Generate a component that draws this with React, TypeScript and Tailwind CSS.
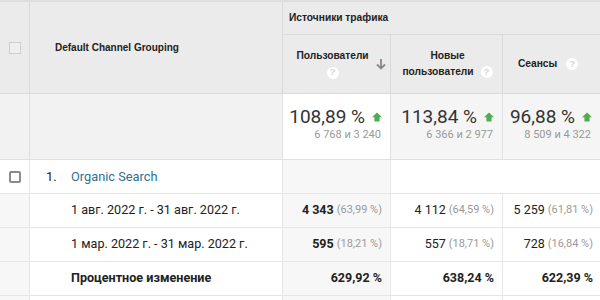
import React from "react";

const arial = { fontFamily: '"Liberation Sans", Arial, sans-serif' };
const roboto = { fontFamily: 'Roboto, "Liberation Sans", sans-serif' };

function Help() {
  return (
    <span className="inline-flex h-[12px] w-[12px] items-center justify-center rounded-full bg-white text-[9px] font-bold leading-none text-[#d4d4d4]" style={arial}>
      ?
    </span>
  );
}

function Up() {
  return (
    <svg width="10" height="10" viewBox="0 0 10 10" className="shrink-0">
      <polygon points="5,0.5 10,5.2 7.6,5.2 7.6,9.5 2.4,9.5 2.4,5.2 0,5.2" fill="#4cae4f" />
    </svg>
  );
}

function Summary({ v, s, bg, last }: { v: string; s: string; bg: string; last?: boolean }) {
  return (
    <div className={`h-[66px] ${last ? "" : "border-r"} border-b border-[#e0e0e0] ${bg} flex flex-col items-end pr-[8px] pt-[10px]`} style={roboto}>
      <div className="flex items-center gap-[7px]">
        <span className="text-[19px] leading-[25px] text-[#333]">{v}</span>
        <Up />
      </div>
      <span className="mr-[1px] text-[11px] leading-[12px] text-[#999]">{s}</span>
    </div>
  );
}

function Val({ b, p, bold, bg, last }: { b: string; p: string; bold?: boolean; bg: string; last?: boolean }) {
  return (
    <div className={`h-[34px] ${last ? "pr-[7px]" : "border-r pr-[8px]"} border-b border-[#e6e6e6] ${bg} flex items-center justify-end`} style={roboto}>
      <span className={`text-[12.5px] text-[#222] ${bold ? "font-bold" : ""}`}>{b}</span>
      <span className="ml-[3px] text-[11px] text-[#9a9a9a]">{p}</span>
    </div>
  );
}

export default function App() {
  const left = "h-[34px] border-r border-b border-[#e6e6e6] bg-[#f7f7f7]";
  const label = "flex h-[34px] items-center border-r border-b border-[#e6e6e6] bg-white pl-[41px] text-[12.6px] text-[#222]";
  const pct = "flex h-[34px] items-center justify-end border-b border-[#e6e6e6] text-[12.5px] font-bold text-[#222]";
  return (
    <div className="h-[300px] w-[600px] overflow-hidden bg-white">
      <div className="grid grid-cols-[30px_253px_108px_112px_97px] border-t-2 border-[#dedede]">
        {/* header */}
        <div className="row-span-2 flex h-[92px] items-center justify-center border-r border-b border-[#dadada] bg-[#ebebeb]">
          <div className="h-[12px] w-[12px] border border-[#cfcfcf] bg-[#efefef]" />
        </div>
        <div className="row-span-2 flex h-[92px] items-center border-r border-b border-[#dadada] bg-[#ebebeb] pl-[25px]">
          <span className="text-[10px] font-bold text-[#222]" style={arial}>Default Channel Grouping</span>
        </div>
        <div className="col-span-3 flex h-[33px] items-center border-b border-[#dadada] bg-[#ebebeb] pl-[6px]">
          <span className="text-[10.2px] font-bold text-[#222]" style={arial}>Источники трафика</span>
        </div>
        <div className="relative flex h-[59px] flex-col items-center justify-center gap-[5px] border-r border-b border-[#dadada] bg-[#ebebeb] pr-[8px]" style={arial}>
          <span className="text-[10.2px] font-bold leading-[12px] text-[#222]">Пользователи</span>
          <Help />
          <svg width="10" height="12" viewBox="0 0 10 12" className="absolute right-[4px] top-[23px]">
            <path d="M5 1 V10 M1 6.5 L5 10.5 L9 6.5" stroke="#888" strokeWidth="1.8" fill="none" />
          </svg>
        </div>
        <div className="flex h-[59px] flex-col items-center justify-center border-r border-b border-[#dadada] bg-[#ebebeb] pl-[2px]" style={arial}>
          <span className="text-[10.2px] font-bold leading-[16px] text-[#222]">Новые</span>
          <div className="flex items-center gap-[7px]">
            <span className="text-[10.2px] font-bold leading-[16px] text-[#222]">пользователи</span>
            <Help />
          </div>
        </div>
        <div className="flex h-[59px] items-center border-b border-[#dadada] bg-[#ebebeb] pl-[15px] gap-[9px]" style={arial}>
          <span className="text-[10.2px] font-bold text-[#222]">Сеансы</span>
          <Help />
        </div>

        {/* summary */}
        <div className="h-[66px] border-r border-b border-[#e0e0e0] bg-[#f2f2f2]" />
        <div className="h-[66px] border-r border-b border-[#e0e0e0] bg-[#f2f2f2]" />
        <Summary v="108,89 %" s="6 768 и 3 240" bg="bg-white" />
        <Summary v="113,84 %" s="6 366 и 2 977" bg="bg-[#f5f5f5]" />
        <Summary v="96,88 %" s="8 509 и 4 322" bg="bg-[#f5f5f5]" last />

        {/* organic */}
        <div className="flex h-[34px] items-center justify-center border-r border-b border-[#e6e6e6] bg-white">
          <div className="h-[12px] w-[12px] rounded-[2px] border-2 border-[#8a8a8a]" />
        </div>
        <div className="flex h-[34px] items-center border-r border-b border-[#e6e6e6] bg-white pl-[16px] text-[12.8px]" style={roboto}>
          <span className="w-[25px] text-[#222]">1.</span>
          <span className="text-[#2f6f93]">Organic Search</span>
        </div>
        <div className="h-[34px] border-r border-b border-[#e6e6e6] bg-[#f7f7f7]" />
        <div className="col-span-2 h-[34px] border-b border-[#e6e6e6] bg-white" />

        {/* date 1 */}
        <div className={left} />
        <div className={label} style={roboto}>1 авг. 2022 г. - 31 авг. 2022 г.</div>
        <Val b="4 343" p="(63,99 %)" bold bg="bg-[#f7f7f7]" />
        <Val b="4 112" p="(64,59 %)" bg="bg-white" />
        <Val b="5 259" p="(61,81 %)" bg="bg-white" last />

        {/* date 2 */}
        <div className={left} />
        <div className={label} style={roboto}>1 мар. 2022 г. - 31 мар. 2022 г.</div>
        <Val b="595" p="(18,21 %)" bold bg="bg-[#f7f7f7]" />
        <Val b="557" p="(18,71 %)" bg="bg-white" />
        <Val b="728" p="(16,84 %)" bg="bg-white" last />

        {/* change */}
        <div className={left} />
        <div className={`${label} font-bold`} style={roboto}>Процентное изменение</div>
        <div className={`${pct} border-r bg-[#f7f7f7] pr-[8px]`} style={roboto}>629,92 %</div>
        <div className={`${pct} border-r bg-white pr-[8px]`} style={roboto}>638,24 %</div>
        <div className={`${pct} bg-white pr-[7px]`} style={roboto}>622,39 %</div>

        {/* next row */}
        <div className={left} />
        <div className="h-[34px] border-r border-[#e6e6e6] bg-white" />
        <div className="h-[34px] border-r border-[#e6e6e6] bg-[#f7f7f7]" />
        <div className="h-[34px] border-r border-[#e6e6e6] bg-white" />
        <div className="h-[34px] bg-white" />
      </div>
    </div>
  );
}
